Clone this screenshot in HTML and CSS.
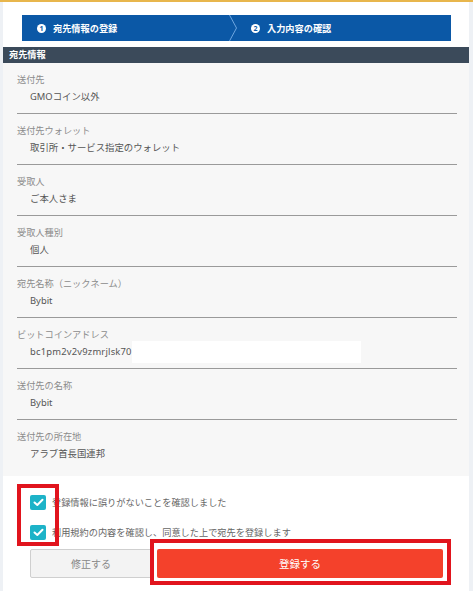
FILE: index.html
```html
<!DOCTYPE html>
<html lang="ja">
<head>
    <meta charset="UTF-8">
    <meta name="viewport" content="width=device-width, initial-scale=1.0">
    <title>宛先情報の確認</title>
    <link rel="stylesheet" href="styles.css">
</head>
<body>

<div class="page">
    <div class="card">

        <div class="steps">
            <div class="step step-first">
                <span class="step-num">1</span>
                <span>宛先情報の登録</span>
            </div>
            <svg class="step-arrow" width="9" height="26" viewBox="0 0 9 26">
                <polyline points="0.5,0 7.5,13 0.5,26" fill="none" stroke="#6ea6e0" stroke-width="1"/>
            </svg>
            <div class="step">
                <span class="step-num">2</span>
                <span>入力内容の確認</span>
            </div>
        </div>

        <div class="section-head">宛先情報</div>

        <div class="details">
            <div class="row">
                <div class="label">送付先</div>
                <div class="value">GMOコイン以外</div>
            </div>
            <div class="row">
                <div class="label">送付先ウォレット</div>
                <div class="value">取引所・サービス指定のウォレット</div>
            </div>
            <div class="row">
                <div class="label">受取人</div>
                <div class="value">ご本人さま</div>
            </div>
            <div class="row">
                <div class="label">受取人種別</div>
                <div class="value">個人</div>
            </div>
            <div class="row">
                <div class="label">宛先名称（ニックネーム）</div>
                <div class="value">Bybit</div>
            </div>
            <div class="row">
                <div class="label">ビットコインアドレス</div>
                <div class="value"><span class="latin">bc1pm2v2v9zmrjlsk70</span><span class="mask"></span></div>
            </div>
            <div class="row">
                <div class="label">送付先の名称</div>
                <div class="value">Bybit</div>
            </div>
            <div class="row">
                <div class="label">送付先の所在地</div>
                <div class="value">アラブ首長国連邦</div>
            </div>
        </div>

        <div class="agree">
            <label class="check">
                <span class="box">
                    <svg width="11" height="9" viewBox="0 0 11 9"><polyline points="1.5,4.5 4.3,7 9.5,1.8" fill="none" stroke="#fff" stroke-width="2" stroke-linecap="round" stroke-linejoin="round"/></svg>
                </span>
                <span>登録情報に誤りがないことを確認しました</span>
            </label>
            <label class="check">
                <span class="box">
                    <svg width="11" height="9" viewBox="0 0 11 9"><polyline points="1.5,4.5 4.3,7 9.5,1.8" fill="none" stroke="#fff" stroke-width="2" stroke-linecap="round" stroke-linejoin="round"/></svg>
                </span>
                <span>利用規約の内容を確認し、同意した上で宛先を登録します</span>
            </label>
            <div class="mark mark-checks"></div>
        </div>

        <div class="actions">
            <button class="btn btn-back">修正する</button>
            <button class="btn btn-submit">登録する</button>
            <div class="mark mark-submit"></div>
        </div>

    </div>
</div>

</body>
</html>
```

FILE: styles.css
```css
body {
    margin: 0;
    font-family: "Noto Sans", "Noto Sans CJK JP", sans-serif;
    background-color: #eef1f5;
}

.page {
    border-top: 2px solid #e8b64c;
    padding: 0 4px 0 3px;
    min-height: 589px;
}

.card {
    background-color: #fff;
    padding-top: 13px;
    min-height: 576px;
}

/* step bar */
.steps {
    display: flex;
    height: 26px;
    margin: 0 18px 6px 19px;
    background-color: #0b58a6;
    color: #fff;
    font-size: 9.2px;
    font-weight: bold;
}

.step {
    flex: 1;
    display: flex;
    align-items: center;
    gap: 7px;
    padding-left: 13px;
}

.step-first {
    flex: none;
    width: 192px;
    padding-left: 15px;
}

.step-arrow {
    flex: none;
}

.step-num {
    width: 9px;
    height: 9px;
    border-radius: 50%;
    background-color: #fff;
    color: #0b58a6;
    font-size: 7px;
    line-height: 9px;
    text-align: center;
}

.section-head {
    height: 16px;
    line-height: 16px;
    padding-left: 6px;
    background-color: #3b4a5a;
    color: #fff;
    font-size: 9.2px;
    font-weight: bold;
}

/* confirmation list */
.details {
    background-color: #f7f7f7;
    padding: 0 12px 6px 14px;
}

.row {
    padding: 9px 0 8px;
    border-bottom: 1px solid #9a9a9a;
}

.row:last-child {
    border-bottom: none;
}

.label {
    line-height: 16px;
    font-size: 9.2px;
    color: #8c8c8c;
}

.value {
    margin-top: 1px;
    padding-left: 13px;
    line-height: 16px;
    font-size: 9.4px;
    color: #555;
}

.latin {
    letter-spacing: 0.2px;
}

.mask {
    display: inline-block;
    width: 229px;
    height: 22px;
    margin: -3px 0;
    vertical-align: middle;
    background-color: #fff;
}

/* agreement */
.agree {
    position: relative;
    display: flex;
    flex-direction: column;
    gap: 12px;
    padding: 17px 0 0 27px;
}

.check {
    display: flex;
    align-items: center;
    gap: 6px;
    height: 18px;
    font-size: 9.2px;
    color: #666;
}

.box {
    width: 16px;
    height: 15px;
    border-radius: 2px;
    background-color: #1db3c8;
    display: flex;
    align-items: center;
    justify-content: center;
}

.actions {
    position: relative;
    display: flex;
    gap: 5px;
    margin-top: 8px;
    padding: 0 26px 0 27px;
}

.btn {
    height: 29px;
    border-radius: 2px;
    font-family: inherit;
    font-size: 10px;
    cursor: pointer;
}

.btn-back {
    width: 122px;
    background-color: #f3f3f3;
    border: 1px solid #cfcfcf;
    color: #888;
}

.btn-submit {
    flex: 1;
    background-color: #f4412b;
    border: none;
    color: #fff;
    font-size: 10.5px;
}

/* red highlight frames drawn over the screenshot */
.mark {
    position: absolute;
    box-sizing: border-box;
    border: 4px solid #e1141d;
}

.mark-checks {
    top: 8px;
    left: 14px;
    width: 42px;
    height: 62px;
}

.mark-submit {
    top: -10px;
    left: 147px;
    width: 301px;
    height: 46px;
}
```
